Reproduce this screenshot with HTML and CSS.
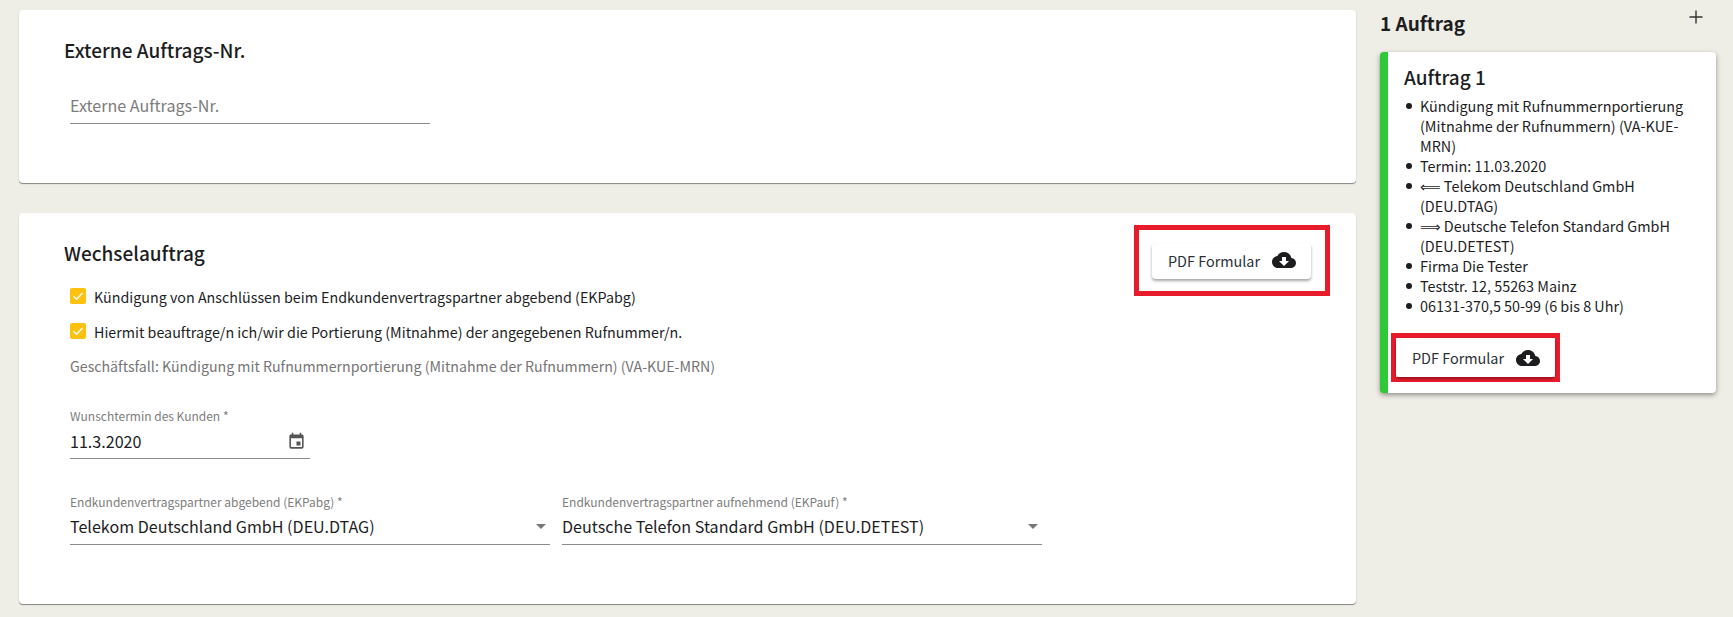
FILE: index.html
```html
<!DOCTYPE html>
<html lang="de">
<head>
<meta charset="utf-8">
<title>Wechselauftrag</title>
<link rel="stylesheet" href="styles.css">
</head>
<body>
<div class="page">
  <main class="main">
    <section class="card card-ext">
      <h2 class="title">Externe Auftrags-Nr.</h2>
      <div class="field field-ext"><span class="placeholder">Externe Auftrags-Nr.</span></div>
    </section>
    <section class="card card-wechsel">
      <div class="highlight highlight-top">
        <button class="pdf pdf-raised" type="button"><span>PDF Formular</span>
          <svg class="cloud" viewBox="0 0 24 24"><path d="M19.35 10.04C18.67 6.59 15.64 4 12 4 9.11 4 6.6 5.64 5.35 8.04 2.34 8.36 0 10.91 0 14c0 3.31 2.69 6 6 6h13c2.76 0 5-2.24 5-5 0-2.64-2.05-4.78-4.65-4.96zM17 13l-5 5-5-5h3V9h4v4h3z"/></svg>
        </button>
      </div>
      <h2 class="title">Wechselauftrag</h2>
      <div class="check-row check-first">
        <span class="box"><svg viewBox="0 0 16 16"><path d="M3.5 8.2l3 3 6-6.2" fill="none" stroke="#fff" stroke-width="1.3"/></svg></span>
        <span>Kündigung von Anschlüssen beim Endkundenvertragspartner abgebend (EKPabg)</span>
      </div>
      <div class="check-row">
        <span class="box"><svg viewBox="0 0 16 16"><path d="M3.5 8.2l3 3 6-6.2" fill="none" stroke="#fff" stroke-width="1.3"/></svg></span>
        <span>Hiermit beauftrage/n ich/wir die Portierung (Mitnahme) der angegebenen Rufnummer/n.</span>
      </div>
      <p class="case">Geschäftsfall: Kündigung mit Rufnummernportierung (Mitnahme der Rufnummern) (VA-KUE-MRN)</p>
      <div class="field field-date">
        <label class="small-label">Wunschtermin des Kunden *</label>
        <div class="value-row"><span>11.3.2020</span>
          <svg class="calendar" viewBox="0 0 24 24"><path d="M17 12h-5v5h5v-5zM16 1v2H8V1H6v2H5c-1.11 0-1.99.9-1.99 2L3 19c0 1.1.89 2 2 2h14c1.1 0 2-.9 2-2V5c0-1.1-.9-2-2-2h-1V1h-2zm3 18H5V8h14v11z"/></svg>
        </div>
      </div>
      <div class="selects">
        <div class="field field-select">
          <label class="small-label">Endkundenvertragspartner abgebend (EKPabg) *</label>
          <div class="value-row"><span>Telekom Deutschland GmbH (DEU.DTAG)</span><i class="caret"></i></div>
        </div>
        <div class="field field-select">
          <label class="small-label">Endkundenvertragspartner aufnehmend (EKPauf) *</label>
          <div class="value-row"><span>Deutsche Telefon Standard GmbH (DEU.DETEST)</span><i class="caret"></i></div>
        </div>
      </div>
    </section>
  </main>
  <aside class="side">
    <header class="side-head">
      <h2 class="side-title">1 Auftrag</h2>
      <svg class="plus" viewBox="0 0 16 16"><path d="M8 1.5v13M1.5 8h13" stroke="#333" stroke-width="1.4" fill="none"/></svg>
    </header>
    <article class="order">
      <h3 class="order-title">Auftrag 1</h3>
      <ul class="order-list">
        <li>Kündigung mit Rufnummernportierung (Mitnahme der Rufnummern) (VA-KUE-MRN)</li>
        <li>Termin: 11.03.2020</li>
        <li>⟸ Telekom Deutschland GmbH (DEU.DTAG)</li>
        <li>⟹ Deutsche Telefon Standard GmbH (DEU.DETEST)</li>
        <li>Firma Die Tester</li>
        <li>Teststr. 12, 55263 Mainz</li>
        <li>06131-370,5 50-99 (6 bis 8 Uhr)</li>
      </ul>
      <div class="highlight-flow">
        <button class="pdf pdf-raised" type="button"><span>PDF Formular</span>
          <svg class="cloud" viewBox="0 0 24 24"><path d="M19.35 10.04C18.67 6.59 15.64 4 12 4 9.11 4 6.6 5.64 5.35 8.04 2.34 8.36 0 10.91 0 14c0 3.31 2.69 6 6 6h13c2.76 0 5-2.24 5-5 0-2.64-2.05-4.78-4.65-4.96zM17 13l-5 5-5-5h3V9h4v4h3z"/></svg>
        </button>
      </div>
    </article>
  </aside>
</div>
</body>
</html>
```
FILE: styles.css
```css
* { box-sizing: border-box; }
html, body { margin: 0; height: 100%; }
body {
  background: #eeeee6;
  color: #1d1d1f;
  font-family: "Noto Sans CJK SC", "Noto Sans", "DejaVu Sans", sans-serif;
  overflow: hidden;
}
.page {
  display: flex;
  gap: 24px;
  padding: 10px 17px 0 19px;
}
.main { width: 1337px; display: flex; flex-direction: column; gap: 30px; }
.card {
  position: relative;
  background: #fff;
  border-radius: 4px;
  box-shadow: 0 1px 1px rgba(0,0,0,.45);
  padding: 0 45px;
}
.card-ext { height: 173px; padding-top: 27px; }
.card-wechsel { height: 391px; padding-top: 27px; }
.title { margin: 0; font-size: 19px; line-height: 26px; font-weight: 500; }
.field { color: #1d1d1f; }
.field-ext {
  width: 360px;
  height: 42px;
  margin: 19px 0 0 6px;
  border-bottom: 1px solid #8c8c8c;
  padding-top: 11px;
}
.placeholder { font-size: 16.1px; line-height: 24px; color: #7c7c7c; display: block; }
.check-row {
  display: flex;
  align-items: center;
  gap: 8px;
  margin-left: 6px;
  height: 20px;
  margin-top: 15px;
  font-size: 14.3px;
}
.check-first { margin-top: 20px; }
.box { width: 16px; height: 16px; background: #fdc20f; border-radius: 2px; display: block; }
.box svg { display: block; }
.case { margin: 15px 0 0 6px; font-size: 14.2px; line-height: 20px; color: #757575; }
.small-label { display: block; font-size: 12px; line-height: 16px; color: #7d7d7d; }
.value-row {
  display: flex;
  align-items: center;
  justify-content: space-between;
  height: 34px;
  font-size: 16.1px;
  line-height: 24px;
  border-bottom: 1px solid #8c8c8c;
}
.field-date { width: 240px; margin: 32px 0 0 6px; }
.field-date .value-row { height: 35px; padding-right: 4px; }
.calendar { width: 19px; height: 19px; fill: #555; }
.selects { display: flex; gap: 12px; margin: 35px 0 0 6px; }
.field-select { width: 480px; }
.field-select .small-label { margin-bottom: 1px; }
.field-select .value-row { padding-bottom: 3px; }
.caret {
  width: 0; height: 0;
  border-left: 5px solid transparent;
  border-right: 5px solid transparent;
  border-top: 5px solid #777;
  margin-right: 4px;
}
.highlight {
  position: absolute;
  left: 1115px;
  top: 12px;
  width: 196px;
  height: 71px;
  border: 5px solid #e81b2b;
  padding: 13px 13px;
}
.pdf {
  display: flex;
  align-items: center;
  gap: 12px;
  border: 0;
  background: #fff;
  color: #2b2f36;
  font: inherit;
  font-size: 14.4px;
  padding: 0;
  height: 36px;
  width: 159px;
  padding-left: 16px;
  border-radius: 4px;
}
.pdf-raised { box-shadow: 0 2px 3px rgba(0,0,0,.35); }
.highlight .pdf { padding-bottom: 2px; }
.cloud { width: 24px; height: 24px; fill: #1d1d1f; flex: none; }
.side { width: 336px; }
.side-head { display: flex; justify-content: space-between; align-items: flex-start; height: 42px; }
.side-title { margin: 0; font-size: 19px; line-height: 26px; font-weight: 700; }
.plus { width: 16px; height: 16px; margin: -1px 12px 0 0; }
.order {
  background: #fff;
  border-left: 8px solid #2dc937;
  border-radius: 4px;
  box-shadow: 0 2px 5px rgba(0,0,0,.4);
  height: 341px;
  padding: 12px 16px 0 3px;
}
.order-title { margin: 0 0 0 13px; font-size: 19px; line-height: 26px; font-weight: 500; }
.order-list {
  list-style: none;
  margin: 6px 0 0;
  padding: 0 0 0 29px;
  font-size: 14.4px;
  line-height: 20px;
}
.order-list li { position: relative; }
.order-list li::before {
  content: "";
  position: absolute;
  left: -14px;
  top: 7px;
  width: 6px;
  height: 6px;
  border-radius: 50%;
  background: #1d1d1f;
}
.highlight-flow {
  width: 169px;
  height: 49px;
  margin-top: 17px;
  border: 5px solid #e81b2b;
}
.highlight-flow .pdf { height: 39px; padding-left: 16px; }
```
